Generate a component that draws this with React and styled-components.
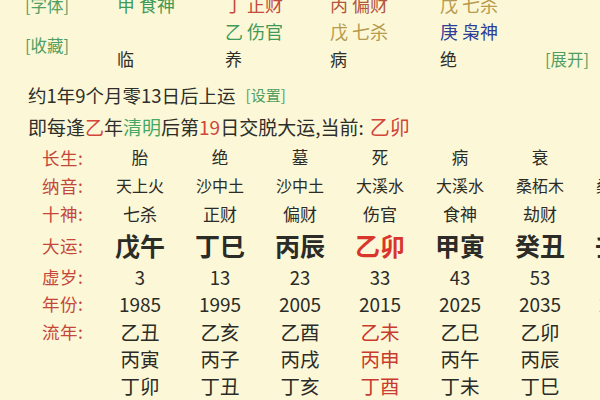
import styled, { createGlobalStyle } from "styled-components";

const GlobalStyle = createGlobalStyle`
  html, body {
    margin: 0;
    padding: 0;
    background: #fcf8d7;
    overflow: hidden;
  }
  body {
    font-family: "Noto Sans CJK SC", "Noto Sans", sans-serif;
    color: #2e2e2a;
  }
`;

const Page = styled.div`
  width: 600px;
  height: 400px;
  overflow: hidden;
  background: #fcf8d7;
`;

const TopGrid = styled.div`
  display: grid;
  grid-template-columns: 92px 108px 105px 110px 105px 1fr;
  grid-auto-rows: 27px;
  margin-top: -9px;
  padding-left: 25px;
  font-size: 18px;
  line-height: 27px;
`;

const Cell = styled.div`
  color: ${(p) => p.color || "#2e2e2a"};
  font-size: ${(p) => p.size || 18}px;
  white-space: nowrap;
  grid-row: ${(p) => p.row || "auto"};
  grid-column: ${(p) => p.col || "auto"};
  align-self: center;
`;

const LinkText = styled.span`
  color: #4f9e62;
  font-size: ${(p) => p.size || 16.5}px;
`;

const Lines = styled.div`
  margin-top: 7px;
  padding-left: 28px;
`;

const Line = styled.div`
  font-size: ${(p) => p.size || 18}px;
  line-height: 32px;
  height: 32px;
  white-space: nowrap;
  display: flex;
  align-items: center;
`;

const Hl = styled.span`
  color: ${(p) => p.color};
  font-size: ${(p) => (p.size ? `${p.size}px` : "inherit")};
  margin-left: ${(p) => p.ml || 0}px;
`;

const Table = styled.div`
  padding-left: 42px;
  display: flex;
  flex-direction: column;
`;

const Row = styled.div`
  display: grid;
  grid-template-columns: 58px repeat(7, 80px);
  height: ${(p) => p.h}px;
  margin-bottom: ${(p) => p.mb || 0}px;
  align-items: center;
  white-space: nowrap;
`;

const Label = styled.div`
  color: #c4473b;
  font-size: 17.5px;
  letter-spacing: 0.5px;
`;

const Value = styled.div`
  text-align: center;
  font-size: ${(p) => p.size}px;
  font-weight: ${(p) => (p.bold ? 700 : 400)};
  color: ${(p) => (p.hot ? (p.bold ? "#d8352c" : "#c93a2f") : "#2b2b27")};
`;

const cols = [
  { cs: "胎", ny: "天上火", ss: "七杀", dy: "戊午", age: "3", yr: "1985", ln: ["乙丑", "丙寅", "丁卯"] },
  { cs: "绝", ny: "沙中土", ss: "正财", dy: "丁巳", age: "13", yr: "1995", ln: ["乙亥", "丙子", "丁丑"] },
  { cs: "墓", ny: "沙中土", ss: "偏财", dy: "丙辰", age: "23", yr: "2005", ln: ["乙酉", "丙戌", "丁亥"] },
  { cs: "死", ny: "大溪水", ss: "伤官", dy: "乙卯", age: "33", yr: "2015", ln: ["乙未", "丙申", "丁酉"], hot: true },
  { cs: "病", ny: "大溪水", ss: "食神", dy: "甲寅", age: "43", yr: "2025", ln: ["乙巳", "丙午", "丁未"] },
  { cs: "衰", ny: "桑柘木", ss: "劫财", dy: "癸丑", age: "53", yr: "2035", ln: ["乙卯", "丙辰", "丁巳"] },
  { cs: "帝旺", ny: "桑柘木", ss: "比肩", dy: "壬子", age: "63", yr: "2045", ln: ["乙丑", "丙寅", "丁卯"] },
];

const rows = [
  { label: "长生:", key: "cs", h: 28, size: 16.5 },
  { label: "纳音:", key: "ny", h: 28, size: 16 },
  { label: "十神:", key: "ss", h: 28, size: 17 },
  { label: "大运:", key: "dy", h: 30, size: 25, bold: true, mb: 6, hot: true },
  { label: "虚岁:", key: "age", h: 27, size: 18.5 },
  { label: "年份:", key: "yr", h: 27, size: 19 },
  { label: "流年:", key: "ln", idx: 0, h: 27, size: 19.5, hot: true },
  { label: "", key: "ln", idx: 1, h: 27, size: 19.5, hot: true },
  { label: "", key: "ln", idx: 2, h: 27, size: 19.5, hot: true },
];

export default function App() {
  return (
    <Page>
      <GlobalStyle />
      <TopGrid>
        <Cell row={1} col={1}><LinkText>[字体]</LinkText></Cell>
        <Cell row={1} col={2} color="#3f9a57">甲 食神</Cell>
        <Cell row={1} col={3} color="#c34a3c">丁 正财</Cell>
        <Cell row={1} col={4} color="#b4553e">丙 偏财</Cell>
        <Cell row={1} col={5} color="#b79a4e">戊 七杀</Cell>

        <Cell row="2 / 4" col={1}><LinkText>[收藏]</LinkText></Cell>
        <Cell row={2} col={3} color="#3f9a57">乙 伤官</Cell>
        <Cell row={2} col={4} color="#b79a4e">戊 七杀</Cell>
        <Cell row={2} col={5} color="#2d3d98">庚 枭神</Cell>

        <Cell row={3} col={2} size={17}>临</Cell>
        <Cell row={3} col={3} size={17}>养</Cell>
        <Cell row={3} col={4} size={17}>病</Cell>
        <Cell row={3} col={5} size={17}>绝</Cell>
        <Cell row={3} col={6}><LinkText size={16.5}>[展开]</LinkText></Cell>
      </TopGrid>

      <Lines>
        <Line size={18.5}>
          约1年9个月零13日后上运
          <Hl color="#4f9e62" size={15} ml={10}>[设置]</Hl>
        </Line>
        <Line size={19}>
          即每逢<Hl color="#d2453a">乙</Hl>年<Hl color="#45a866">清明</Hl>后第
          <Hl color="#d2453a">19</Hl>日交脱大运,当前:
          <Hl color="#d2453a" size={20} ml={6}>乙卯</Hl>
        </Line>
      </Lines>

      <Table>
        {rows.map((r, i) => (
          <Row key={i} h={r.h} mb={r.mb}>
            <Label>{r.label}</Label>
            {cols.map((c, j) => (
              <Value
                key={j}
                size={r.size}
                bold={r.bold}
                hot={r.hot && c.hot}
              >
                {r.key === "ln" ? c.ln[r.idx] : c[r.key]}
              </Value>
            ))}
          </Row>
        ))}
      </Table>
    </Page>
  );
}
